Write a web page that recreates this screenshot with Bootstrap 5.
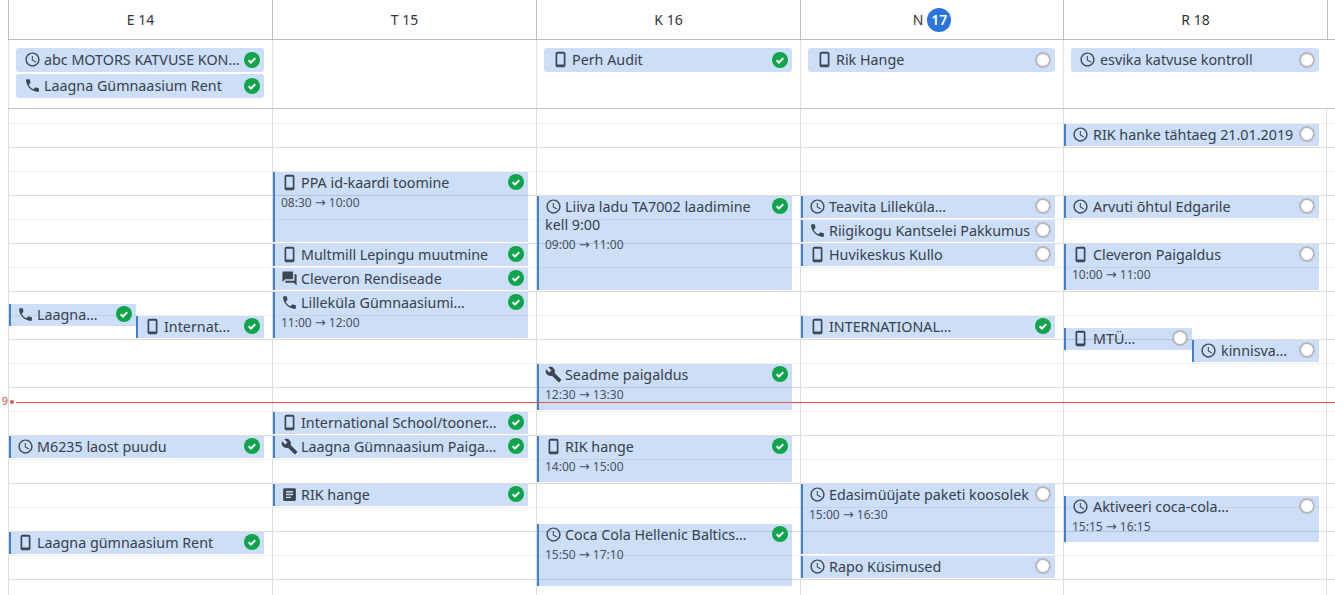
<!DOCTYPE html>
<html lang="et"><head><meta charset="utf-8"><title>Kalender</title>
<link href="https://cdn.jsdelivr.net/npm/bootstrap@5.3.0/dist/css/bootstrap.min.css" rel="stylesheet">
<script src="https://cdn.jsdelivr.net/npm/bootstrap@5.3.0/dist/js/bootstrap.bundle.min.js"></script>
<style>
html,body{height:595px;overflow:hidden;background:#fff}
body{font-family:"Noto Sans","Open Sans",sans-serif;font-size:14.3px;color:#37404c}
.cal-head,.cal-allday,.cal-time{display:grid;grid-template-columns:264px 264px 264px 263px 264px 8px;margin-left:8px}
.cal-head{height:40px;border-bottom:1px solid #bdbdbd;color:#333;font-size:14px}
.cal-head>div{border-left:1px solid #bdbdbd;display:flex;align-items:center;justify-content:center;gap:4px}
.today-num{width:24px;height:24px;border-radius:50%;background:#2a75dc;color:#fff;font-weight:600;display:flex;align-items:center;justify-content:center}
.cal-allday{height:69px;border-bottom:1px solid #c6c6c6}
.cal-allday>div{border-left:1px solid #e6e6e6;padding:8px 8px 0 7px;display:flex;flex-direction:column;gap:2px}
.cal-time{height:486px;position:relative;overflow:visible;
 background-image:linear-gradient(#dedede 1px,transparent 1px),linear-gradient(#f1f1f1 1px,transparent 1px);
 background-size:100% 48px;background-position:0 38px,0 14px}
.tcol{position:relative;border-left:1px solid #dedede}
.ev{position:absolute;left:0;width:255px;background:rgba(0,90,220,.2);border-left:2px solid #3f7fd0;padding:1px 24px 0 6px;line-height:19px;color:#37404c;overflow:hidden}
.ev-half1{width:127px}
.ev-half2{left:127px;width:128px}
.col-n .ev{width:254px}
.col-r .ico{margin-right:4px}
.col-r .ev-half1{width:128px}
.col-r .ev-half2{left:128px;width:127px}
.ad{position:relative;height:24px;background:rgba(0,90,220,.2);border-radius:3px;padding:2px 24px 0 8px;line-height:20px;white-space:nowrap;overflow:hidden}
.ttl{display:block;line-height:18px}
.ev>.ttl{padding-top:1px}
.one{white-space:nowrap;overflow:hidden}
.ico{width:17px;height:17px;fill:#3d4652;margin-right:3px;vertical-align:-3px}
.tm{display:block;font-size:12px;line-height:16px;margin-top:3px;color:#48515c}
.arw{font-family:"DejaVu Sans",sans-serif;font-size:13px;line-height:1}
.st{position:absolute;right:4px;top:2px;width:16px;height:16px}
.ad .st{top:4px}
.now-line{position:absolute;left:8px;right:0;top:293px;border-top:1px solid #e2554e}
.now-dot{position:absolute;left:2px;top:291px;width:4px;height:4px;border-radius:50%;background:#e2554e}
.now-lab{position:absolute;left:-7px;top:285px;font-size:11px;line-height:14px;color:#d9534f;width:7px;text-align:right}
</style></head>
<body>
<svg width="0" height="0" class="position-absolute"><defs>
<symbol id="i-clock" viewBox="0 0 24 24"><path d="M11.99 2C6.47 2 2 6.48 2 12s4.47 10 9.99 10C17.52 22 22 17.52 22 12S17.52 2 11.99 2zM12 20c-4.42 0-8-3.58-8-8s3.58-8 8-8 8 3.58 8 8-3.58 8-8 8zm.5-13H11v6l5.25 3.15.75-1.23-4.5-2.67z"/></symbol>
<symbol id="i-call" viewBox="0 0 24 24"><path d="M6.62 10.79c1.44 2.83 3.76 5.14 6.59 6.59l2.2-2.2c.27-.27.67-.36 1.02-.24 1.12.37 2.33.57 3.57.57.55 0 1 .45 1 1V20c0 .55-.45 1-1 1-9.39 0-17-7.61-17-17 0-.55.45-1 1-1h3.5c.55 0 1 .45 1 1 0 1.25.2 2.45.57 3.57.11.35.03.74-.25 1.02l-2.2 2.2z"/></symbol>
<symbol id="i-mob" viewBox="0 0 24 24"><path fill-rule="evenodd" d="M7.5 1h9A2.5 2.5 0 0 1 19 3.500v17a2.500 2.500 0 0 1-2.500 2.500h-9A2.500 2.500 0 0 1 5 20.500v-17A2.500 2.500 0 0 1 7.500 1zM7.400 4v15h9.200V4z"/></symbol>
<symbol id="i-chat" viewBox="0 0 24 24"><path d="M21 6h-2v9H6v2c0 .55.45 1 1 1h11l4 4V7c0-.55-.45-1-1-1zm-4 6V3c0-.55-.45-1-1-1H3c-.55 0-1 .45-1 1v14l4-4h10c.55 0 1-.45 1-1z"/></symbol>
<symbol id="i-tool" viewBox="0 0 24 24"><path d="M22.7 19l-9.1-9.1c.9-2.3.4-5-1.5-6.9-2-2-5-2.4-7.4-1.3L9 6 6 9 1.6 4.7C.4 7.1.9 10.1 2.9 12.1c1.9 1.9 4.6 2.4 6.9 1.5l9.1 9.1c.4.4 1 .4 1.4 0l2.3-2.3c.5-.4.5-1.1.1-1.4z"/></symbol>
<symbol id="i-doc" viewBox="0 0 24 24"><path d="M19 3H5c-1.1 0-2 .9-2 2v14c0 1.1.9 2 2 2h14c1.1 0 2-.9 2-2V5c0-1.1-.9-2-2-2zm-5 14H7v-2h7v2zm3-4H7v-2h10v2zm0-4H7V7h10v2z"/></symbol>
<symbol id="s-ok" viewBox="0 0 16 16"><circle cx="8" cy="8" r="8" fill="#10a54a"/><path d="M4.600 8.300l2.300 2.200 4.400-4.400" fill="none" stroke="#fff" stroke-width="2"/></symbol>
<symbol id="s-no" viewBox="0 0 16 16"><circle cx="8" cy="8" r="7" fill="#fff" stroke="#b9b9b9" stroke-width="2"/></symbol>
</defs></svg>

<div class="cal-head">
 <div>E 14</div><div>T 15</div><div>K 16</div>
 <div>N <span class="today-num">17</span></div>
 <div>R 18</div><div></div>
</div>

<div class="cal-allday">
 <div>
  <div class="ad"><svg class="ico"><use href="#i-clock"/></svg>abc MOTORS KATVUSE KON…<svg class="st"><use href="#s-ok"/></svg></div>
  <div class="ad"><svg class="ico"><use href="#i-call"/></svg>Laagna Gümnaasium Rent<svg class="st"><use href="#s-ok"/></svg></div>
 </div>
 <div></div>
 <div><div class="ad"><svg class="ico"><use href="#i-mob"/></svg>Perh Audit<svg class="st"><use href="#s-ok"/></svg></div></div>
 <div><div class="ad"><svg class="ico"><use href="#i-mob"/></svg>Rik Hange<svg class="st"><use href="#s-no"/></svg></div></div>
 <div class="col-r"><div class="ad"><svg class="ico"><use href="#i-clock"/></svg>esvika katvuse kontroll<svg class="st"><use href="#s-no"/></svg></div></div>
 <div class="border-0 p-0"></div>
</div>

<div class="cal-time">
 <div class="tcol">
  <div class="ev ev-half1 one" style="top:195px;height:22px"><svg class="ico"><use href="#i-call"/></svg>Laagna…<svg class="st"><use href="#s-ok"/></svg></div>
  <div class="ev ev-half2 one" style="top:207px;height:22px"><svg class="ico"><use href="#i-mob"/></svg>Internat…<svg class="st"><use href="#s-ok"/></svg></div>
  <div class="ev one" style="top:327px;height:22px"><svg class="ico"><use href="#i-clock"/></svg>M6235 laost puudu<svg class="st"><use href="#s-ok"/></svg></div>
  <div class="ev one" style="top:423px;height:22px"><svg class="ico"><use href="#i-mob"/></svg>Laagna gümnaasium Rent<svg class="st"><use href="#s-ok"/></svg></div>
 </div>
 <div class="tcol">
  <div class="ev" style="top:63px;height:70px"><span class="ttl one"><svg class="ico"><use href="#i-mob"/></svg>PPA id-kaardi toomine</span><span class="tm">08:30 <span class="arw">→</span> 10:00</span><svg class="st"><use href="#s-ok"/></svg></div>
  <div class="ev one" style="top:135px;height:22px"><svg class="ico"><use href="#i-mob"/></svg>Multmill Lepingu muutmine<svg class="st"><use href="#s-ok"/></svg></div>
  <div class="ev one" style="top:159px;height:22px"><svg class="ico"><use href="#i-chat"/></svg>Cleveron Rendiseade<svg class="st"><use href="#s-ok"/></svg></div>
  <div class="ev" style="top:183px;height:46px"><span class="ttl one"><svg class="ico"><use href="#i-call"/></svg>Lilleküla Gümnaasiumi…</span><span class="tm">11:00 <span class="arw">→</span> 12:00</span><svg class="st"><use href="#s-ok"/></svg></div>
  <div class="ev one" style="top:303px;height:22px"><svg class="ico"><use href="#i-mob"/></svg>International School/tooner…<svg class="st"><use href="#s-ok"/></svg></div>
  <div class="ev one" style="top:327px;height:22px"><svg class="ico"><use href="#i-tool"/></svg>Laagna Gümnaasium Paiga…<svg class="st"><use href="#s-ok"/></svg></div>
  <div class="ev one" style="top:375px;height:22px"><svg class="ico"><use href="#i-doc"/></svg>RIK hange<svg class="st"><use href="#s-ok"/></svg></div>
 </div>
 <div class="tcol">
  <div class="ev" style="top:87px;height:94px"><span class="ttl"><svg class="ico"><use href="#i-clock"/></svg>Liiva ladu TA7002 laadimine kell 9:00</span><span class="tm">09:00 <span class="arw">→</span> 11:00</span><svg class="st"><use href="#s-ok"/></svg></div>
  <div class="ev" style="top:255px;height:46px"><span class="ttl one"><svg class="ico"><use href="#i-tool"/></svg>Seadme paigaldus</span><span class="tm">12:30 <span class="arw">→</span> 13:30</span><svg class="st"><use href="#s-ok"/></svg></div>
  <div class="ev" style="top:327px;height:46px"><span class="ttl one"><svg class="ico"><use href="#i-mob"/></svg>RIK hange</span><span class="tm">14:00 <span class="arw">→</span> 15:00</span><svg class="st"><use href="#s-ok"/></svg></div>
  <div class="ev" style="top:415px;height:62px"><span class="ttl one"><svg class="ico"><use href="#i-clock"/></svg>Coca Cola Hellenic Baltics…</span><span class="tm">15:50 <span class="arw">→</span> 17:10</span><svg class="st"><use href="#s-ok"/></svg></div>
 </div>
 <div class="tcol col-n">
  <div class="ev one" style="top:87px;height:22px"><svg class="ico"><use href="#i-clock"/></svg>Teavita Lilleküla…<svg class="st"><use href="#s-no"/></svg></div>
  <div class="ev one" style="top:111px;height:22px"><svg class="ico"><use href="#i-call"/></svg>Riigikogu Kantselei Pakkumus<svg class="st"><use href="#s-no"/></svg></div>
  <div class="ev one" style="top:135px;height:22px"><svg class="ico"><use href="#i-mob"/></svg>Huvikeskus Kullo<svg class="st"><use href="#s-no"/></svg></div>
  <div class="ev one" style="top:207px;height:22px"><svg class="ico"><use href="#i-mob"/></svg>INTERNATIONAL…<svg class="st"><use href="#s-ok"/></svg></div>
  <div class="ev" style="top:375px;height:70px"><span class="ttl one"><svg class="ico"><use href="#i-clock"/></svg>Edasimüüjate paketi koosolek</span><span class="tm">15:00 <span class="arw">→</span> 16:30</span><svg class="st"><use href="#s-no"/></svg></div>
  <div class="ev one" style="top:447px;height:22px"><svg class="ico"><use href="#i-clock"/></svg>Rapo Küsimused<svg class="st"><use href="#s-no"/></svg></div>
 </div>
 <div class="tcol col-r border-end">
  <div class="ev one" style="top:15px;height:22px"><svg class="ico"><use href="#i-clock"/></svg>RIK hanke tähtaeg 21.01.2019<svg class="st"><use href="#s-no"/></svg></div>
  <div class="ev one" style="top:87px;height:22px"><svg class="ico"><use href="#i-clock"/></svg>Arvuti õhtul Edgarile<svg class="st"><use href="#s-no"/></svg></div>
  <div class="ev" style="top:135px;height:46px"><span class="ttl one"><svg class="ico"><use href="#i-mob"/></svg>Cleveron Paigaldus</span><span class="tm">10:00 <span class="arw">→</span> 11:00</span><svg class="st"><use href="#s-no"/></svg></div>
  <div class="ev ev-half1 one" style="top:219px;height:22px"><svg class="ico"><use href="#i-mob"/></svg>MTÜ…<svg class="st"><use href="#s-no"/></svg></div>
  <div class="ev ev-half2 one" style="top:231px;height:22px"><svg class="ico"><use href="#i-clock"/></svg>kinnisva…<svg class="st"><use href="#s-no"/></svg></div>
  <div class="ev" style="top:387px;height:46px"><span class="ttl one"><svg class="ico"><use href="#i-clock"/></svg>Aktiveeri coca-cola…</span><span class="tm">15:15 <span class="arw">→</span> 16:15</span><svg class="st"><use href="#s-no"/></svg></div>
 </div>
 <div></div>
 <span class="now-lab">9</span><span class="now-dot"></span><div class="now-line"></div>
</div>
</body></html>
